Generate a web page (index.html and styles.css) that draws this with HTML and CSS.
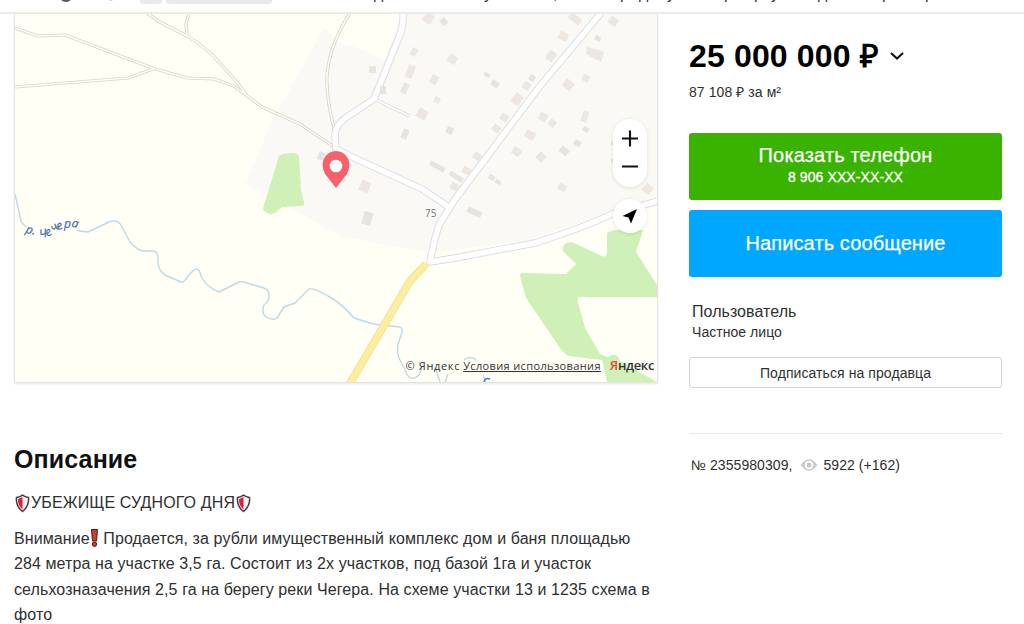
FILE: index.html
```html
<!DOCTYPE html>
<html lang="ru">
<head>
<meta charset="utf-8">
<title>Объявление</title>
<link rel="stylesheet" href="styles.css">
</head>
<body>
<header class="topbar">
  <svg class="topbar-art" viewBox="0 0 1024 12">
    <circle cx="66" cy="-5" r="7" fill="#555"/>
    <circle cx="111" cy="-2" r="2.5" fill="#aaa"/>
    <rect x="140" y="-10" width="22" height="14" rx="3" fill="#e9e9e9"/>
    <rect x="166" y="-10" width="106" height="14" rx="3" fill="#e9e9e9"/>
    <g class="topbar-text">
      <text x="374" y="-1">д</text><text x="484" y="-1">у</text><text x="553" y="-1">,</text>
      <text x="620" y="-1">р</text><text x="639" y="-1">д</text><text x="667" y="-1">у</text>
      <text x="724" y="-1">р</text><text x="754" y="-1">р</text><text x="771" y="-1">у</text>
      <text x="818" y="-1">д</text><text x="882" y="-1">р</text><text x="925" y="-1">р</text>
    </g>
  </svg>
</header>
<main class="page">
  <section class="content">
    <div class="map">
      <svg class="map-canvas" viewBox="15 14 642 368">
        <rect x="15" y="14" width="642" height="368" fill="#fffff6"/>
        <path d="M324 28L346 14H657V197L590 219L530 240L430 253L340 236L246 184L271 123Z" fill="#faf9f6"/>
        <path d="M351 14H401L385 60L352 46L340 43L324 27Z" fill="#fffff6"/>
        <path d="M279 156Q283 153 292 153Q298 153 299 157L301 190L304 202Q305 206 302 206L282 207L275 213Q270 216 264 211Q262 209 265 202Z" fill="#cff0b7"/>
        <path d="M607 233L614 230H643L636 252L657 285V297H579Q577 298 578 302L585 328L600 354L608 357Q617 351 620 361L657 382H607L602 360L569 356Q563 353 560 348L526 298L520 276Q520 272 526 273L566 274L574 266L576 264L563 251Q561 246 567 243Q571 241 576 244L602 256Q606 258 607 253Z" fill="#cff0b7"/>
        <g class="track-edge">
          <path d="M15 28L38 36L65 35L155 69L188 78L214 79L234 86L262 107L300 124L337 149"/>
          <path d="M15 87L128 78L153 69"/>
          <path d="M147 13L158 21L187 36Q207 48 218 61L236 81L245 93"/>
          <path d="M189 13L186 24L187 36"/>
          <path d="M350 13Q329 46 327 76Q326 99 335 132"/>
        </g>
        <g class="track-core">
          <path d="M15 28L38 36L65 35L155 69L188 78L214 79L234 86L262 107L300 124L337 149"/>
          <path d="M15 87L128 78L153 69"/>
          <path d="M147 13L158 21L187 36Q207 48 218 61L236 81L245 93"/>
          <path d="M189 13L186 24L187 36"/>
          <path d="M350 13Q329 46 327 76Q326 99 335 132"/>
        </g>
        <g class="river">
          <path d="M15 194L21 221Q22 224 27 227M77 230L80 231L88 232L109 222Q117 219 121 225L130 242Q138 251 144 251L154 251Q158 252 158 259Q157 269 165 275L181 282Q183 283 186 279Q193 269 197 269Q200 270 201 276Q206 287 219 292L239 282Q242 281 247 283L264 288Q270 290 269 297Q269 301 264 305Q261 313 266 317Q273 321 277 318L284 307L295 303L309 289Q312 287 328 296Q340 302 354 318L373 324L400 327Q403 328 402 332L398 345Q397 352 399 358L406 372Q410 383 419 375L422 368"/>
          <path d="M435 367L440 382M448 374L445 382M464 360Q470 355 476 360M483 375L486 382"/>
        </g>
        <g class="road-edge">
          <path d="M403 13Q404 25 399 37L374 99L347 117Q335 125 335 135L336 149L350 156L422 189L452 209"/>
          <path class="thin" d="M374 99L410 116"/>
          <path d="M601 13L540 86L456 198L440 223Q435 235 430 262L455 258L535 243Q580 229 617 212L662 200"/>
        </g>
        <g class="road-core">
          <path d="M403 13Q404 25 399 37L374 99L347 117Q335 125 335 135L336 149L350 156L422 189L452 209"/>
          <path class="thin" d="M374 99L410 116"/>
          <path d="M601 13L540 86L456 198L440 223Q435 235 430 262L455 258L535 243Q580 229 617 212L662 200"/>
        </g>
        <path d="M426 264L410 281L349 385" fill="none" stroke="#f6e29e" stroke-width="8"/>
        <path d="M426 264L410 281L349 385" fill="none" stroke="#fcee9f" stroke-width="6"/>
        <g fill="#eee7e1">
          <rect x="424" y="13" width="9" height="10" transform="rotate(35 428 18)"/>
          <rect x="411" y="48" width="6" height="8" transform="rotate(28 414 52)"/>
          <rect x="407" y="65" width="7" height="13" transform="rotate(20 410 71)"/>
          <rect x="402" y="83" width="6" height="11" transform="rotate(24 405 88)"/>
          <rect x="431" y="75" width="7" height="9" transform="rotate(25 434 79)"/>
          <rect x="448" y="55" width="9" height="8" transform="rotate(35 452 59)"/>
          <rect x="434" y="97" width="6" height="6" transform="rotate(28 437 100)"/>
          <rect x="417" y="109" width="10" height="10" transform="rotate(28 422 114)"/>
          <rect x="569" y="15" width="13" height="7" transform="rotate(38 575 18)"/>
          <rect x="559" y="32" width="9" height="8" transform="rotate(30 563 36)"/>
          <rect x="547" y="51" width="8" height="10" transform="rotate(35 551 56)"/>
          <rect x="609" y="17" width="9" height="8" transform="rotate(35 613 21)"/>
          <path d="M587 47L595 49L604 52L601 62L593 58L586 54Z"/>
          <rect x="563" y="80" width="10" height="9" transform="rotate(38 568 85)"/>
          <rect x="582" y="75" width="7" height="7" transform="rotate(30 586 79)"/>
          <rect x="513" y="94" width="9" height="11" transform="rotate(35 518 99)"/>
          <rect x="523" y="82" width="7" height="8" transform="rotate(35 527 86)"/>
          <rect x="500" y="114" width="8" height="7" transform="rotate(35 504 118)"/>
          <rect x="492" y="125" width="8" height="7" transform="rotate(35 496 129)"/>
          <rect x="539" y="113" width="8" height="8" transform="rotate(28 543 117)"/>
          <rect x="549" y="120" width="7" height="7" transform="rotate(35 553 123)"/>
          <rect x="525" y="131" width="10" height="8" transform="rotate(30 530 135)"/>
          <rect x="512" y="148" width="9" height="8" transform="rotate(35 517 152)"/>
          <rect x="582" y="111" width="6" height="11" transform="rotate(20 585 116)"/>
          <rect x="537" y="153" width="8" height="8" transform="rotate(45 541 157)"/>
          <rect x="473" y="153" width="8" height="7" transform="rotate(35 477 157)"/>
          <rect x="462" y="167" width="9" height="7" transform="rotate(30 466 171)"/>
          <rect x="450" y="183" width="9" height="7" transform="rotate(28 454 187)"/>
          <rect x="558" y="184" width="8" height="7" transform="rotate(30 562 188)"/>
          <rect x="643" y="184" width="9" height="9" transform="rotate(40 647 189)"/>
          <rect x="360" y="181" width="10" height="11" transform="rotate(22 365 186)"/>
          <rect x="369" y="66" width="7" height="7" fill="#ece8d8"/>
        </g>
        <g fill="#e5e4e1">
          <rect x="441" y="18" width="6" height="7" transform="rotate(-35 444 22)"/>
          <rect x="380" y="86" width="6" height="8"/>
          <rect x="402" y="129" width="6" height="10" transform="rotate(24 405 134)"/>
          <rect x="446" y="127" width="7" height="7" transform="rotate(24 450 131)"/>
          <rect x="484" y="73" width="6" height="4" transform="rotate(28 487 75)"/>
          <rect x="491" y="81" width="8" height="6" transform="rotate(32 495 84)"/>
          <rect x="529" y="75" width="6" height="6" transform="rotate(35 532 78)"/>
          <rect x="595" y="36" width="6" height="5" transform="rotate(28 598 38)"/>
          <rect x="583" y="127" width="6" height="5" transform="rotate(28 586 129)"/>
          <rect x="574" y="140" width="7" height="6" transform="rotate(30 577 143)"/>
          <rect x="560" y="148" width="9" height="7" transform="rotate(38 565 151)"/>
          <rect x="429" y="164" width="16" height="5" transform="rotate(28 437 167)"/>
          <rect x="449" y="174" width="15" height="5" transform="rotate(34 456 176)"/>
          <rect x="489" y="175" width="6" height="5" transform="rotate(28 492 177)"/>
          <rect x="495" y="180" width="6" height="4" transform="rotate(28 498 182)"/>
          <rect x="467" y="209" width="15" height="6" transform="rotate(25 474 212)"/>
          <rect x="363" y="212" width="9" height="13" transform="rotate(15 368 218)"/>
          <rect x="318" y="152" width="6" height="8" transform="rotate(20 321 156)"/>
          <rect x="611" y="141" width="2" height="4"/><rect x="611" y="159" width="2" height="4"/>
        </g>
        <text class="house-no" x="425" y="217">75</text>
        <text class="river-name" x="25 32 37 40 47.500 54 58 64 71" y="232.500 234 236 238.500 237 232.500 230.500 228 226.500" rotate="18 18 0 -12 -30 -38 -22 0 14">р. Чечера</text>
        <path d="M484 382q1-5 6-3" fill="none" stroke="#4f7db9" stroke-width="1.5"/>
        <path d="M336 188L325 174Q320 163 325 157A13 13 0 0 1 347 157Q352 163 347 174Z" fill="#f8616a"/>
        <circle cx="336" cy="166" r="6.3" fill="#fff"/>
      </svg>
      <div class="controls">
        <div class="zoom">
          <svg viewBox="0 0 34 66"><path d="M9 19.5H25M17 11.5V27.5M9 47.5H25" stroke="#111" stroke-width="2.1" fill="none"/></svg>
        </div>
        <div class="locate">
          <svg viewBox="0 0 34 34"><path d="M24 10L9.500 17L15.500 18.500L18 24.500Z" fill="#000"/></svg>
        </div>
      </div>
      <div class="copyright"><span class="copy-owner">© Яндекс</span><span class="terms">Условия использования</span><span class="brand"><span class="brand-first">Я</span>ндекс</span></div>
    </div>
    <h2 class="heading">Описание</h2>
    <p class="lead">
      <svg class="shield" viewBox="0 0 15 19"><path d="M1.5 3.5Q5 3 7.5 1.2Q10 3 13.5 3.5Q14.5 12 7.5 17.5Q.5 12 1.5 3.5Z" fill="#f5f5f5" stroke="#4b3a3d" stroke-width="1.5"/><path d="M7.5 3V15.5Q2.5 11 3.1 5Z" fill="#e51c39"/></svg><span class="lead-text">УБЕЖИЩЕ СУДНОГО ДНЯ</span><svg class="shield" viewBox="0 0 15 19"><path d="M1.5 3.5Q5 3 7.5 1.2Q10 3 13.5 3.5Q14.5 12 7.5 17.5Q.5 12 1.5 3.5Z" fill="#f5f5f5" stroke="#4b3a3d" stroke-width="1.5"/><path d="M7.5 3V15.5Q2.5 11 3.1 5Z" fill="#e51c39"/></svg>
    </p>
    <p class="description">
      <span class="line">Внимание<svg class="bang" viewBox="0 0 8 18"><path d="M1 .5H7L6 12H2Z" fill="#cf3d25" stroke="#42201d"/><circle cx="4" cy="15.200" r="2.200" fill="#cf3d25" stroke="#42201d"/></svg> Продается, за рубли имущественный комплекс дом и баня площадью</span>
      <span class="line">284 метра на участке 3,5 га. Состоит из 2х участков, под базой 1га и участок</span>
      <span class="line">сельхозназачения 2,5 га на берегу реки Чегера. На схеме участки 13 и 1235 схема в</span>
      <span class="line">фото</span>
    </p>
  </section>
  <aside class="side">
    <div class="price"><span>25 000 000 ₽</span><svg class="chevron" viewBox="0 0 14 10"><path d="M1 2L7 7.5L13 2" fill="none" stroke="#111" stroke-width="2.1"/></svg></div>
    <div class="unit-price">87 108 ₽ за м²</div>
    <div class="button phone"><span class="phone-label">Показать телефон</span><span class="phone-no">8 906 XXX-XX-XX</span></div>
    <div class="button message"><span>Написать сообщение</span></div>
    <div class="seller"><span>Пользователь</span></div>
    <div class="seller-type"><span>Частное лицо</span></div>
    <div class="subscribe"><span>Подписаться на продавца</span></div>
    <div class="stats"><span class="ad-no">№ 2355980309,</span><svg class="eye" viewBox="0 0 18 14"><path d="M.5 7Q9-4.500 17.500 7Q9 18.500.5 7Z" fill="#ccc"/><circle cx="9" cy="7" r="4.200" fill="#fff"/><circle cx="9" cy="7" r="2.500" fill="#c8c8c8"/></svg><span class="views">5922 (+162)</span></div>
  </aside>
</main>
</body>
</html>
```
FILE: styles.css
```css
* { box-sizing: border-box; }
body { margin: 0; width: 1024px; height: 624px; overflow: hidden; background: #fff; color: #303030; font-family: "Liberation Sans", Arial, sans-serif; }
svg { display: block; flex: none; }
.topbar { height: 14px; border-bottom: 2px solid #ebebeb; }
.topbar-art { width: 1024px; height: 12px; }
.topbar-text { font-size: 16px; fill: #333; }
.page { display: flex; gap: 31px; padding-left: 14px; }
.content { width: 644px; }
.map { position: relative; height: 369px; border: 1px solid #e3e3e1; border-top: 0; box-shadow: 0 1px 2px #e6e6e6; }
.map-canvas { width: 642px; height: 368px; }
.track-edge, .track-core, .road-edge, .road-core, .river { fill: none; stroke-linejoin: round; }
.track-edge { stroke: #ddd3c6; stroke-width: 3.2; }
.track-core { stroke: #fffdf8; stroke-width: 1.5; }
.river { stroke: #bed9e5; stroke-width: 1.4; }
.road-edge { stroke: #dcdae0; stroke-width: 7.4; }
.road-core { stroke: #fff; stroke-width: 5.6; }
.road-edge .thin { stroke-width: 3.4; }
.road-core .thin { stroke-width: 1.8; }
.house-no { font: 10px "Open Sans", sans-serif; fill: #777; }
.river-name { font: italic 12px "Open Sans", sans-serif; fill: #3f6caf; stroke: #3f6caf; stroke-width: .2px; }
.controls { position: absolute; right: 10px; top: 105px; display: flex; flex-direction: column; gap: 12px; }
.zoom, .locate { width: 34px; background: #fff; border-radius: 17px; box-shadow: 0 1px 4px rgba(0,0,0,.1); }
.zoom { height: 68px; }
.locate { height: 34px; }
.copyright { position: absolute; right: 3px; bottom: 7px; display: flex; align-items: baseline; font-family: "Open Sans", sans-serif; font-size: 11px; line-height: 18px; color: #333; }
.copy-owner { letter-spacing: .66px; }
.terms { margin-left: 3px; letter-spacing: .36px; text-decoration: underline; }
.brand { margin-left: 9px; font-size: 13px; font-weight: 600; letter-spacing: -.35px; }
.brand-first { color: #e64b3c; }
.heading { margin: 61px 0 0; font-size: 25px; line-height: 30px; letter-spacing: .12px; color: #111; }
.lead { display: flex; align-items: center; height: 22px; margin: 18px 0 0; font-size: 16px; letter-spacing: .13px; }
.shield { width: 17px; height: 19px; }
.description { display: flex; flex-direction: column; margin: 12px 0 0; font-size: 16px; line-height: 25.3px; letter-spacing: .095px; }
.line { white-space: nowrap; }
.bang { display: inline-block; width: 9px; height: 18px; vertical-align: -3px; }
.side { width: 313px; white-space: nowrap; }
.price { display: flex; align-items: center; gap: 11px; height: 36px; margin-top: 22px; font-size: 32px; font-weight: 700; letter-spacing: .15px; color: #000; }
.chevron { width: 14px; height: 10px; margin-top: 4px; }
.unit-price { height: 18px; margin-top: 11px; font-size: 14px; line-height: 18px; letter-spacing: .08px; }
.button { display: flex; flex-direction: column; align-items: center; justify-content: center; border-radius: 3px; color: #fff; }
.phone { height: 67px; margin-top: 32px; padding-bottom: 3px; background: #39b300; }
.phone-label { font-size: 20px; line-height: 24px; letter-spacing: .15px; -webkit-text-stroke: .25px #fff; }
.phone-no { font-size: 14px; line-height: 20px; letter-spacing: .1px; -webkit-text-stroke: .3px #fff; }
.message { height: 67px; margin-top: 10px; background: #00a7ff; font-size: 20px; letter-spacing: .12px; -webkit-text-stroke: .25px #fff; }
.seller { margin: 25px 0 0 3px; font-size: 16px; line-height: 20px; letter-spacing: .05px; }
.seller-type { margin: 0 0 0 3px; font-size: 14px; line-height: 20px; letter-spacing: .05px; }
.subscribe { display: flex; align-items: center; justify-content: center; height: 31px; margin-top: 15px; border: 1px solid #d4d4d4; border-radius: 3px; font-size: 14px; letter-spacing: .08px; }
.stats { display: flex; align-items: center; height: 62px; margin-top: 45px; padding-left: 2px; border-top: 1px solid #e7e7e7; font-size: 14px; letter-spacing: .06px; }
.eye { width: 18px; height: 14px; margin: 0 5px 0 8px; }
```
